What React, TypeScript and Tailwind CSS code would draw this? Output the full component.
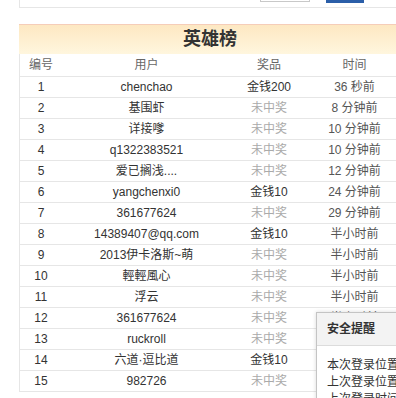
const ROWS: Array<{ rank: number; user: string; prize: string; time: string }> = [
  { rank: 1, user: "chenchao", prize: "金钱200", time: "36 秒前" },
  { rank: 2, user: "基围虾", prize: "未中奖", time: "8 分钟前" },
  { rank: 3, user: "详接嗲", prize: "未中奖", time: "10 分钟前" },
  { rank: 4, user: "q1322383521", prize: "未中奖", time: "10 分钟前" },
  { rank: 5, user: "爱已搁浅....", prize: "未中奖", time: "12 分钟前" },
  { rank: 6, user: "yangchenxi0", prize: "金钱10", time: "24 分钟前" },
  { rank: 7, user: "361677624", prize: "未中奖", time: "29 分钟前" },
  { rank: 8, user: "14389407@qq.com", prize: "金钱10", time: "半小时前" },
  { rank: 9, user: "2013伊卡洛斯~萌", prize: "未中奖", time: "半小时前" },
  { rank: 10, user: "輕輕風心", prize: "未中奖", time: "半小时前" },
  { rank: 11, user: "浮云", prize: "未中奖", time: "半小时前" },
  { rank: 12, user: "361677624", prize: "未中奖", time: "半小时前" },
  { rank: 13, user: "ruckroll", prize: "未中奖", time: "半小时前" },
  { rank: 14, user: "六道·逗比道", prize: "金钱10", time: "半小时前" },
  { rank: 15, user: "982726", prize: "未中奖", time: "半小时前" },
];

const COLS = "grid grid-cols-[42px_169px_76px_95px] items-center text-center";

export default function App() {
  return (
    <div
      className="relative h-[398px] w-[396px] overflow-hidden bg-white text-[12px] text-[#333]"
      style={{ fontFamily: '"Liberation Sans", "Noto Sans CJK SC", sans-serif' }}
    >
      <div className="ml-[19px] w-[382px]">
        {/* search strip, cut off at the top */}
        <div className="flex h-[8px] items-start border-b border-l border-[#e6e6e6]">
          <div className="ml-[240px] h-[2px] w-[50px] border border-t-0 border-[#c8c8c8]" />
          <div className="ml-[16px] h-[3px] w-[38px] bg-[#2b5ea8]" />
        </div>

        <div className="mt-[16px] flex h-[30px] items-center justify-center border-t border-[#f5cdb9] bg-gradient-to-b from-[#fde8c2] to-[#fff6de] text-[18px] font-bold text-[#333]">
          英雄榜
        </div>

        <div className="border-l border-[#e6e6e6]">
          <div className={`${COLS} h-[23px] border-b border-[#e6e6e6] text-[#666]`}>
            <div>编号</div>
            <div>用户</div>
            <div>奖品</div>
            <div>时间</div>
          </div>
          {ROWS.map((row) => (
            <div key={row.rank} className={`${COLS} h-[21px] border-b border-[#e6e6e6]`}>
              <div className="text-[#333]">{row.rank}</div>
              <div className="whitespace-nowrap text-[#333]">{row.user}</div>
              <div className={row.prize === "未中奖" ? "text-[#aaa]" : "text-[#333]"}>{row.prize}</div>
              <div className="text-[#555]">{row.time}</div>
            </div>
          ))}
        </div>
      </div>

      {/* security notice popup, partly off screen */}
      <div className="absolute left-[316px] top-[312px] w-[120px] border border-[#c4c4c4] bg-white shadow-[0_0_4px_rgba(0,0,0,0.15)]">
        <div className="flex h-[33px] items-center border-b border-[#dcdcdc] bg-[#f3f3f3] px-[10px] font-bold text-[#333]">
          安全提醒
        </div>
        <div className="whitespace-nowrap px-[10px] pt-[11px] leading-[17px] text-[#333]">
          <div>本次登录位置</div>
          <div>上次登录位置</div>
          <div>上次登录时间</div>
        </div>
      </div>
    </div>
  );
}
